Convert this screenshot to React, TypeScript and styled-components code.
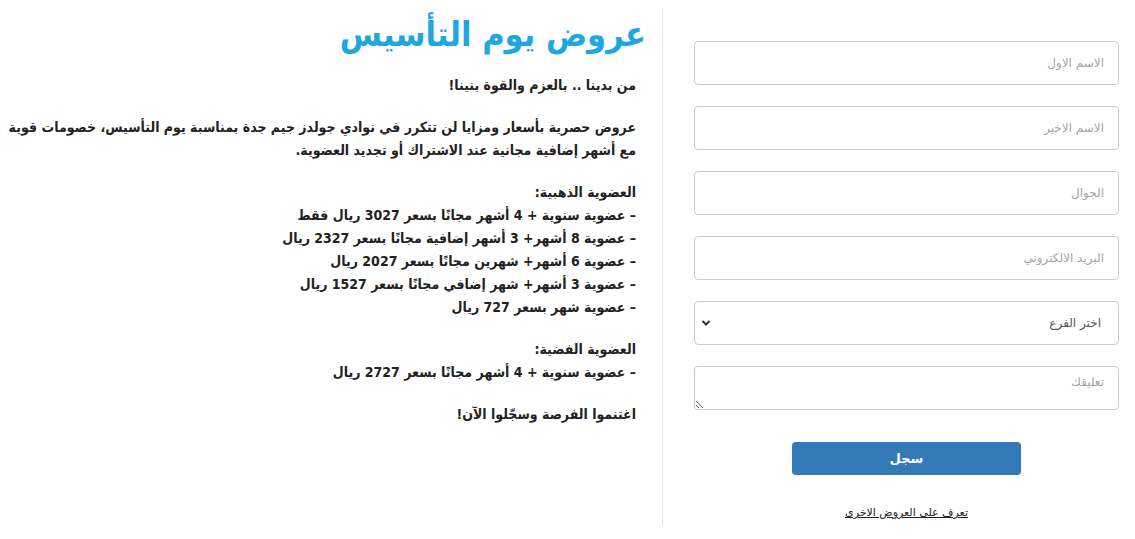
import React from "react";
import styled, { createGlobalStyle } from "styled-components";

const Global = createGlobalStyle`
  html, body { margin: 0; padding: 0; background: #fff; }
  body { font-family: "DejaVu Sans", "Noto Sans", sans-serif; }
  * { box-sizing: border-box; }
`;

const Page = styled.div`
  direction: rtl;
  display: flex;
  flex-direction: row;
  width: 1135px;
  height: 539px;
  padding-top: 8px;
`;

const FormCol = styled.div`
  width: 472px;
  padding: 33px 16px 0 31px;
  display: flex;
  flex-direction: column;
  align-items: stretch;
`;

const TextCol = styled.div`
  width: 663px;
  height: 517px;
  border-right: 1px solid #e6e6e6;
  padding: 0 26px 0 0;
  color: #222;
`;

const Title = styled.h1`
  margin: 0;
  padding-top: 2px;
  margin-right: -10px;
  font-family: "DejaVu Sans Condensed", "DejaVu Sans", sans-serif;
  font-weight: bold;
  font-size: 34px;
  line-height: 48px;
  color: #1ea7e1;
`;

const Para = styled.p<{ $top?: number }>`
  margin: ${(p) => p.$top ?? 0}px 0 19px 0;
  font-family: "DejaVu Sans Condensed", "DejaVu Sans", sans-serif;
  font-weight: bold;
  font-size: 14px;
  line-height: 23px;
`;

const Field = styled.input`
  direction: rtl;
  height: 44px;
  width: 100%;
  margin-bottom: 21px;
  border: 1px solid #ccc;
  border-radius: 4px;
  padding: 0 14px;
  font-family: "DejaVu Sans", sans-serif;
  font-size: 12px;
  color: #555;
  background: #fff;
  &::placeholder { color: #a5a5a5; }
`;

const SelectBox = styled.div`
  height: 44px;
  margin-bottom: 21px;
  border: 1px solid #ccc;
  border-radius: 4px;
  display: flex;
  align-items: center;
  justify-content: space-between;
  padding: 0 17px 0 6px;
  font-size: 12px;
  color: #555;
`;

const Area = styled.textarea`
  direction: rtl;
  height: 44px;
  width: 100%;
  border: 1px solid #ccc;
  border-radius: 4px;
  padding: 8px 14px;
  font-family: "DejaVu Sans", sans-serif;
  font-size: 12px;
  resize: vertical;
  &::placeholder { color: #a5a5a5; }
`;

const Btn = styled.button`
  align-self: center;
  margin-top: 32px;
  width: 229px;
  height: 33px;
  border: none;
  border-radius: 4px;
  background: #337ab7;
  color: #fff;
  font-family: "DejaVu Sans", sans-serif;
  font-weight: bold;
  font-size: 13px;
`;

const More = styled.a`
  align-self: center;
  margin-top: 31px;
  font-size: 11px;
  color: #222;
  text-decoration: underline;
`;

export default function App() {
  return (
    <>
      <Global />
      <Page>
        <FormCol>
          <Field placeholder="الاسم الاول" />
          <Field placeholder="الاسم الاخير" />
          <Field placeholder="الجوال" />
          <Field placeholder="البريد الالكتروني" />
          <SelectBox>
            <span>اختر الفرع</span>
            <svg width="10" height="8" viewBox="0 0 10 8">
              <path d="M1.5 2 L5 5.5 L8.5 2" fill="none" stroke="#333" strokeWidth="2" />
            </svg>
          </SelectBox>
          <Area placeholder="تعليقك" />
          <Btn>سجل</Btn>
          <More>تعرف على العروض الاخرى</More>
        </FormCol>
        <TextCol>
          <Title>عروض يوم التأسيس</Title>
          <Para $top={16}>من بدينا .. بالعزم والقوة بنينا!</Para>
          <Para>
            عروض حصرية بأسعار ومزايا لن تتكرر في نوادي جولدز جيم جدة بمناسبة يوم التأسيس، خصومات قوية مع أشهر إضافية مجانية عند الاشتراك أو تجديد العضوية.
          </Para>
          <Para>
            العضوية الذهبية:
            <br />– عضوية سنوية + 4 أشهر مجانًا بسعر 3027 ريال فقط
            <br />– عضوية 8 أشهر+ 3 أشهر إضافية مجانًا بسعر 2327 ريال
            <br />– عضوية 6 أشهر+ شهرين مجانًا بسعر 2027 ريال
            <br />– عضوية 3 أشهر+ شهر إضافي مجانًا بسعر 1527 ريال
            <br />– عضوية شهر بسعر 727 ريال
          </Para>
          <Para>
            العضوية الفضية:
            <br />– عضوية سنوية + 4 أشهر مجانًا بسعر 2727 ريال
          </Para>
          <Para>اغتنموا الفرصة وسجّلوا الآن!</Para>
        </TextCol>
      </Page>
    </>
  );
}
